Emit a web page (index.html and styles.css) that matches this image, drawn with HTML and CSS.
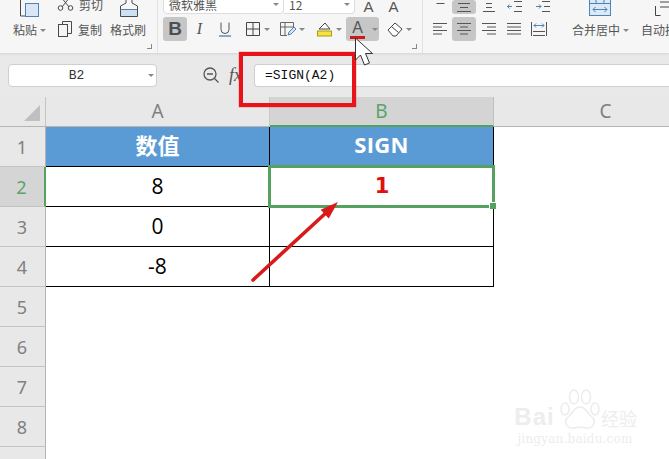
FILE: index.html
```html
<!DOCTYPE html>
<html lang="zh">
<head>
<meta charset="utf-8">
<title>SIGN</title>
<link rel="stylesheet" href="styles.css">
</head>
<body>
<div class="app">
  <header class="ribbon">
    <section class="group clip">
      <div class="col paste">
        <svg class="ic-top" width="24" height="18" viewBox="0 0 24 18"><path d="M2.5-3v19h6" fill="none" stroke="#4a4a4a"/><rect x="7.5" y="3.5" width="13" height="13" fill="#d8e6f5" stroke="#4f83b5"/></svg>
        <div class="label-row"><span>粘贴</span><i class="caret"></i></div>
      </div>
      <div class="col cutcopy">
        <div class="cut">
          <svg width="17" height="11" viewBox="0 0 17 11"><path d="M4-3l8 10M13-3L5 7" fill="none" stroke="#4a4a4a"/><circle cx="3.5" cy="8" r="2.3" fill="none" stroke="#4a4a4a"/><circle cx="13.5" cy="8" r="2.3" fill="none" stroke="#4a4a4a"/></svg>
          <span>剪切</span>
        </div>
        <div class="copy">
          <svg width="16" height="17" viewBox="0 0 16 17"><path d="M5.5 3.5V.5h9v12h-4" fill="none" stroke="#4a4a4a"/><rect x="1.5" y="3.5" width="9" height="12" fill="#f5f5f5" stroke="#4a4a4a"/></svg>
          <span>复制</span>
        </div>
      </div>
      <div class="col painter">
        <svg class="ic-top" width="20" height="18" viewBox="0 0 20 18"><path d="M7-3v6L1.500 6v10.500h17V6L13 3v-6" fill="#f7f7f7" stroke="#4a4a4a"/><rect x="2" y="10" width="16" height="6" fill="#cfe0f2"/><path d="M1.500 9.500h17" stroke="#4f83b5"/></svg>
        <div class="label-row"><span>格式刷</span></div>
      </div>
      <i class="launcher"></i>
    </section>

    <section class="group font">
      <div class="row-top">
        <div class="select font-name"><span>微软雅黑</span><i class="caret"></i></div>
        <div class="select font-size"><span>12</span><i class="caret"></i></div>
        <span class="big-a first">A</span>
        <span class="big-a">A</span>
      </div>
      <div class="row-bottom">
        <button class="tool t24 on bold">B</button>
        <button class="tool t25 italic">I</button>
        <button class="tool t25 under">
          <svg width="14" height="16" viewBox="0 0 14 16"><path d="M3 1.500v7a4 4 0 0 0 8 0v-7" fill="none" stroke="#555"/><path d="M1 15h12" stroke="#5b8fc0" stroke-width="1.500"/></svg>
        </button>
        <button class="tool split w34">
          <svg width="16" height="16" viewBox="0 0 16 16"><path d="M1.500 1.500h13v13h-13zM8 1.500v13M1.500 8h13" fill="none" stroke="#444"/></svg><i class="caret"></i>
        </button>
        <button class="tool split w37">
          <svg width="17" height="16" viewBox="0 0 17 16"><path d="M8 14.500H1.500v-13h13V7M1.500 6h13M6 1.500v13" fill="none" stroke="#666"/><path d="M9 14l1-3 5-5 2 2-5 5z" fill="#d8e6f5" stroke="#4f83b5"/></svg><i class="caret"></i>
        </button>
        <button class="tool split w38">
          <svg width="17" height="16" viewBox="0 0 17 16"><path d="M3 8l6-6 5 6z" fill="#fff" stroke="#444"/><rect x="1.500" y="10" width="14" height="5" fill="#f5e23c" stroke="#a99a20"/></svg><i class="caret"></i>
        </button>
        <button class="tool split w33 on narrow">
          <span class="color-a">A</span><i class="caret"></i>
        </button>
        <button class="tool split w36">
          <svg width="16" height="16" viewBox="0 0 16 16"><path d="M1 9l7-7 7 6-6 7H6z" fill="#fff" stroke="#444"/><path d="M4.500 5.500l7 6" stroke="#444"/></svg><i class="caret"></i>
        </button>
      </div>
      <i class="launcher"></i>
    </section>

    <section class="group align">
      <div class="aligns">
        <div class="row-top">
          <button class="tool t25"><svg width="14" height="14" viewBox="0 0 14 14"><path d="M3.500 3.500h8" stroke="#555"/></svg></button>
          <button class="tool t24 on"><svg width="16" height="14" viewBox="0 0 16 14"><path d="M2 3.500h12M4 7.500h8M1 11.500h14" stroke="#555"/></svg></button>
          <button class="tool t25"><svg width="14" height="14" viewBox="0 0 14 14"><path d="M4 3.500h6M4 7.500h6M1 11.500h12" stroke="#555"/></svg></button>
          <button class="tool t28"><svg width="16" height="14" viewBox="0 0 16 14"><path d="M7 1.500h8M9 6.500h6M7 11.500h8" stroke="#555"/><path d="M5 6.500H.5M2.500 4.500l-2 2 2 2" fill="none" stroke="#4f83b5"/></svg></button>
          <button class="tool t28"><svg width="16" height="14" viewBox="0 0 16 14"><path d="M7 1.500h8M9 6.500h6M7 11.500h8" stroke="#555"/><path d="M1 6.500h5M4 4.500l2 2-2 2" fill="none" stroke="#4f83b5"/></svg></button>
        </div>
        <div class="row-bottom">
          <button class="tool t25"><svg width="14" height="14" viewBox="0 0 14 14"><path d="M0 1.500h14M0 5h9M0 8.500h14M0 12h9" stroke="#555"/></svg></button>
          <button class="tool t24 on"><svg width="14" height="14" viewBox="0 0 14 14"><path d="M0 1.500h14M3 5h8M0 8.500h14M3 12h8" stroke="#555"/></svg></button>
          <button class="tool t25"><svg width="14" height="14" viewBox="0 0 14 14"><path d="M0 1.500h14M5 5h9M0 8.500h14M5 12h9" stroke="#555"/></svg></button>
          <button class="tool t25"><svg width="14" height="14" viewBox="0 0 14 14"><path d="M0 1.500h14M0 5h14M0 8.500h14M0 12h14" stroke="#555"/></svg></button>
          <button class="tool t25"><svg width="16" height="14" viewBox="0 0 16 14"><path d="M.5 0v14M15.500 0v14M2 13.500h12M2 9.500h12" stroke="#555"/><path d="M3 3.500h10M5 1.500l-2 2 2 2M11 1.500l2 2-2 2" fill="none" stroke="#4f83b5"/></svg></button>
        </div>
      </div>
      <div class="col merge">
        <svg class="ic-top" width="22" height="16" viewBox="0 0 22 16"><rect x=".5" y="-4" width="21" height="19.500" fill="#dbe8f6" stroke="#4f83b5"/><path d="M.5 3.500h21M7-4v7M15-4v7M4 9.500h14M6.500 7l-2.500 2.500L6.500 12M15.500 7l2.500 2.500-2.500 2.500" fill="none" stroke="#4f83b5"/></svg>
        <div class="label-row"><span>合并居中</span><i class="caret"></i></div>
      </div>
      <div class="col wrap">
        <svg class="ic-top wrap-ic" width="24" height="16" viewBox="0 0 24 16"><path d="M.5 6v9.500h5M5 2h14M5 7h14" fill="none" stroke="#444"/></svg>
        <div class="label-row"><span>自动换行</span></div>
      </div>
    </section>
  </header>

  <div class="formula-bar">
    <div class="namebox"><span>B2</span><i class="caret"></i></div>
    <svg class="lens" width="17" height="17" viewBox="0 0 17 17"><circle cx="7" cy="7" r="6" fill="none" stroke="#555" stroke-width="1.300"/><path d="M4 7h6M11.500 11.500l4 4" stroke="#555" stroke-width="1.300"/></svg>
    <span class="fx">fx</span>
    <div class="formula-input">=SIGN(A2)</div>
  </div>

  <main class="sheet">
    <div class="corner"><i></i></div>
    <div class="colh">A</div>
    <div class="colh active">B</div>
    <div class="colh">C</div>

    <div class="rowh">1</div>
    <div class="cell head">数值</div>
    <div class="cell head latin">SIGN</div>
    <div class="blank"></div>

    <div class="rowh active">2</div>
    <div class="cell">8</div>
    <div class="cell selected result">1</div>
    <div class="blank"></div>

    <div class="rowh">3</div>
    <div class="cell">0</div>
    <div class="cell"></div>
    <div class="blank"></div>

    <div class="rowh">4</div>
    <div class="cell">-8</div>
    <div class="cell"></div>
    <div class="blank"></div>

    <div class="rowh">5</div><div class="blank"></div><div class="blank"></div><div class="blank"></div>
    <div class="rowh">6</div><div class="blank"></div><div class="blank"></div><div class="blank"></div>
    <div class="rowh">7</div><div class="blank"></div><div class="blank"></div><div class="blank"></div>
    <div class="rowh">8</div><div class="blank"></div><div class="blank"></div><div class="blank"></div>
    <div class="rowh"></div><div class="blank"></div><div class="blank"></div><div class="blank"></div>
  </main>

  <div class="callout"></div>
  <svg class="arrow" width="100" height="90" viewBox="0 0 100 90"><path d="M3 80L78 11" stroke="#d81a1a" stroke-width="3.600" stroke-linecap="round" fill="none"/><path d="M88 2L70.700 9.800l8 8.800z" fill="#d81a1a"/></svg>
  <svg class="cursor" width="22" height="30" viewBox="0 0 22 30"><path d="M1.500 1v22l5-5 4 10 5-2-4-9.500h7z" fill="#fff" stroke="#333"/></svg>

  <div class="watermark">
    <div class="wm-logo">
      <span class="wm-bai">Bai</span>
      <svg width="44" height="42" viewBox="0 0 44 42"><g fill="none" stroke="#ececec" stroke-width="1.500"><ellipse cx="8" cy="20" rx="4" ry="6"/><ellipse cx="17" cy="8" rx="4.500" ry="7"/><ellipse cx="29" cy="8" rx="4.500" ry="7"/><ellipse cx="38" cy="20" rx="4" ry="6"/><path d="M23 18c-6 0-7 6-12 10-5 5-1 12 6 11 4-1 8-1 12 0 7 1 11-6 6-11-5-4-6-10-12-10z"/></g></svg>
      <span class="wm-cn">经验</span>
    </div>
    <div class="wm-url">jingyan.baidu.com</div>
  </div>
</div>
</body>
</html>
```

FILE: styles.css
```css
* { box-sizing: border-box; }
html, body { margin: 0; padding: 0; }
body { width: 669px; height: 459px; overflow: hidden; background: #fff; font-family: "Noto Sans CJK SC", "Noto Sans", sans-serif; }
.app { position: relative; width: 669px; height: 459px; overflow: hidden; }
button { border: 0; padding: 0; margin: 0; background: none; font: inherit; color: inherit; }

/* ribbon */
.ribbon { display: flex; height: 53px; background: #f6f6f6; color: #555; font-size: 12px; box-shadow: 0 1px 2px #d4d4d4; position: relative; z-index: 1; overflow: hidden; }
.group { position: relative; display: flex; flex: none; height: 53px; border-right: 1px solid #e2e2e2; }
.clip { width: 158px; padding-left: 13px; }
.font { width: 265px; flex-direction: column; padding: 0 0 0 5px; gap: 3px; }
.align { width: 400px; border-right: 0; padding-left: 4px; }
.aligns { display: flex; flex: none; flex-direction: column; gap: 3px; width: 143px; }
.row-top { display: flex; height: 14px; align-items: flex-end; }
.row-bottom { display: flex; height: 24px; align-items: center; }
.aligns .row-top { align-items: stretch; }
.col { display: flex; flex: none; flex-direction: column; align-items: flex-start; }
.ic-top { height: 18px; display: block; }
.label-row { display: flex; align-items: center; gap: 3px; margin-top: 3px; height: 18px; line-height: 18px; white-space: nowrap; }
.paste { width: 44px; }
.paste .ic-top { margin-left: 5px; margin-bottom: 0; }
.cutcopy { width: 53px; }
.cut, .copy { display: flex; align-items: center; gap: 5px; }
.cut { height: 11px; }
.cut span { line-height: 11px; margin-top: -3px; }
.copy { margin-top: 10px; height: 17px; gap: 5px; }
.painter { width: 38px; }
.painter .ic-top { margin-left: 9px; }
.caret { display: inline-block; width: 0; height: 0; border-left: 3px solid transparent; border-right: 3px solid transparent; border-top: 3px solid #888; flex: none; }
.launcher { position: absolute; right: 5px; bottom: 4px; width: 5px; height: 5px; border-right: 1px solid #888; border-bottom: 1px solid #888; }

.select { display: flex; align-items: center; justify-content: space-between; height: 20px; margin-top: -6px; background: #fff; border: 1px solid #ddd; padding: 0 4px 0 5px; align-self: flex-start; }
.font-name { width: 121px; border-radius: 0 0 4px 4px; }
.font-size { width: 71px; border-left: 0; border-radius: 0 0 4px 0; }
.big-a { font-family: "Liberation Sans", sans-serif; font-size: 15px; line-height: 14px; color: #555; width: 25px; text-align: center; }
.big-a.first { margin-left: 1px; }

.tool { display: flex; align-items: center; justify-content: center; flex: none; height: 100%; border-radius: 3px; }
.t24 { width: 24px; }
.t25 { width: 25px; }
.t28 { width: 28px; }
.on { background: #c6c6c6; }
.split { justify-content: flex-start; padding-left: 8px; gap: 3px; }
.w34 { width: 34px; }
.w37 { width: 37px; }
.w38 { width: 38px; }
.w33 { width: 33px; }
.w36 { width: 36px; }
.bold { font: 700 19px "Liberation Sans", sans-serif; color: #4a5058; }
.italic { font: italic 16px "Liberation Serif", serif; color: #555; }
.narrow { padding-left: 4px; gap: 7px; }
.color-a { width: 15px; height: 20px; font: 16px/18px "Liberation Sans", sans-serif; color: #555; text-align: center; border-bottom: 3px solid #d01818; }
.merge { width: 69px; margin-left: 2px; padding-left: 0; }
.merge .ic-top { margin-left: 17px; margin-bottom: 2px; height: 16px; }
.wrap .ic-top { margin-left: 14px; margin-bottom: 2px; height: 16px; }

/* formula bar */
.formula-bar { display: flex; align-items: center; height: 44px; padding: 1px 0 0 8px; background: #e9e9e9; font-family: "Liberation Mono", monospace; font-size: 13px; color: #333; }
.namebox { display: flex; align-items: center; width: 149px; height: 23px; background: #fff; border: 1px solid #cfcfcf; border-radius: 4px; padding: 0 2px 0 0; }
.namebox span { flex: 1; text-align: center; padding-right: 4px; }
.lens { margin-left: 46px; }
.fx { width: 34px; padding-left: 9px; font: italic 18px "Liberation Serif", serif; color: #555; }
.formula-input { flex: 1; height: 23px; line-height: 21px; background: #fff; border: 1px solid #cfcfcf; border-right: 0; border-radius: 4px 0 0 4px; padding-left: 10px; color: #111; }

/* sheet */
.sheet { display: grid; grid-template-columns: 46px 224px 224px 224px; grid-template-rows: 30px repeat(9, 40px); font-family: "Open Sans", "Noto Sans", sans-serif; }
.corner { background: #e8e8e8; border-right: 1px solid #c4c4c4; border-bottom: 1px solid #b5b5b5; position: relative; display: flex; padding: 8px 0 0 24px; }
.corner i { width: 16px; height: 16px; background: #c0c0c0; clip-path: polygon(100% 0, 100% 100%, 0 100%); }
.colh { background: #e8e8e8; border-right: 1px solid #c9c9c9; border-bottom: 1px solid #b5b5b5; color: #808080; font-size: 19px; line-height: 29px; text-align: center; font-family: "Noto Sans", sans-serif; }
.colh.active { background: #d4d4d4; color: #5aa469; border-bottom: 2px solid #55a160; border-right-color: #c0c0c0; }
.rowh { background: #e8e8e8; border-right: 1px solid #b5b5b5; border-bottom: 1px solid #c4c4c4; color: #808080; font-size: 18px; display: flex; align-items: center; justify-content: center; font-family: "Noto Sans", sans-serif; padding-right: 1px; }
.rowh.active { background: #d5d5d5; color: #5aa469; border-right: 2px solid #55a160; }
.cell { display: flex; align-items: center; justify-content: center; border-right: 1px solid #000; border-bottom: 1px solid #000; font-size: 21px; color: #000; background: #fff; padding-bottom: 1px; }
.cell.head { background: #5b9bd5; color: #fff; font: 700 22px "Noto Sans CJK SC", sans-serif; padding-bottom: 5px; }
.cell.latin { font: 700 22px "Open Sans", sans-serif; letter-spacing: .3px; }
.cell.result { color: #e01010; font: 700 21px "DejaVu Sans", sans-serif; }
.cell.selected { position: relative; z-index: 1; border: 0; padding-bottom: 2px; }
.cell.selected::before { content: ""; position: absolute; inset: -2px -1px -1px -2px; border: 3px solid #55a160; }
.cell.selected::after { content: ""; position: absolute; right: -2px; bottom: -2px; width: 6px; height: 6px; background: #55a160; border: 1px solid #fff; border-width: 1px 0 0 1px; }
.blank { background: #fff; }

/* annotations lying over the sheet */
.callout { position: absolute; left: 239px; top: 52px; width: 117px; height: 55px; border: 4.500px solid #e8141c; box-shadow: 0 0 1px #e8141c; z-index: 2; }
.arrow { position: absolute; left: 250px; top: 200px; z-index: 3; }
.cursor { position: absolute; left: 354px; top: 37px; z-index: 4; }
.watermark { position: absolute; left: 513px; top: 389px; width: 124px; color: #ededed; z-index: 1; text-align: center; }
.wm-logo { display: flex; align-items: flex-end; height: 42px; }
.wm-bai { font: 700 24px/28px "Liberation Sans", sans-serif; letter-spacing: 1px; width: 44px; }
.wm-logo svg { margin-left: 1px; flex: none; }
.wm-cn { font-size: 18px; line-height: 26px; white-space: nowrap; }
.wm-url { font: 12px/14px "DejaVu Serif", serif; letter-spacing: .2px; white-space: nowrap; margin-top: 1px; }
```
